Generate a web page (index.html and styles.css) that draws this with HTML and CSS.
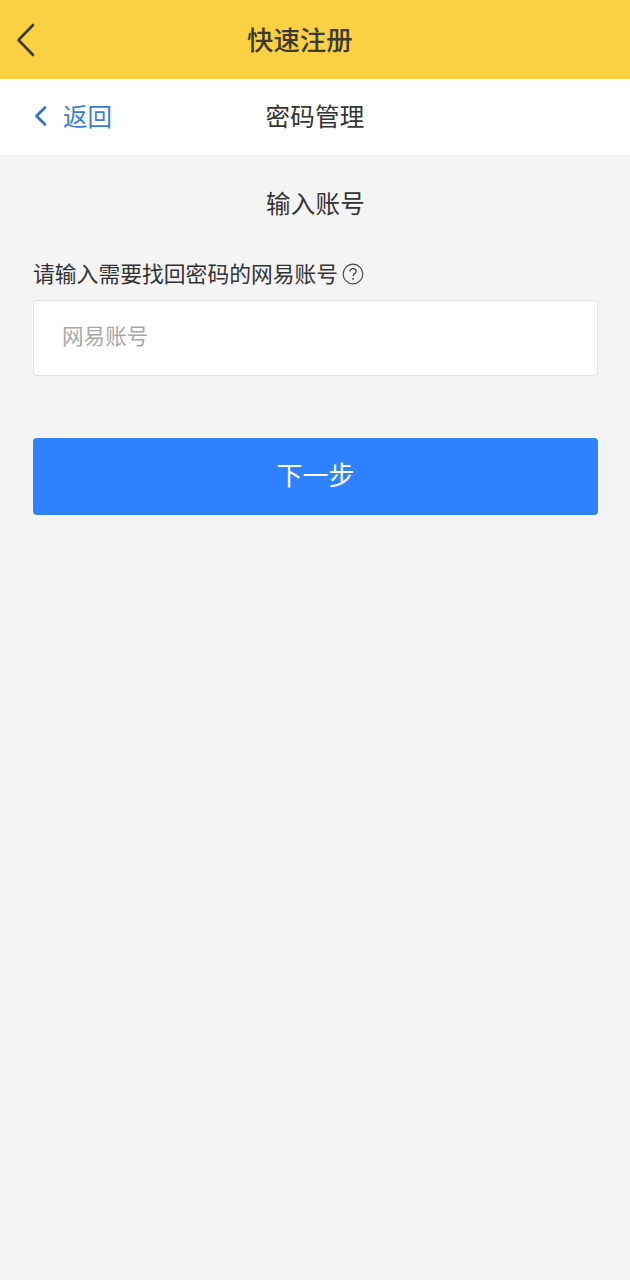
FILE: index.html
```html
<!DOCTYPE html>
<html lang="zh-CN">
<head>
    <meta charset="UTF-8">
    <meta name="viewport" content="width=device-width, initial-scale=1.0">
    <title>快速注册</title>
    <link rel="stylesheet" href="styles.css">
</head>
<body>

    <header class="app-bar">
        <svg class="app-back" width="20" height="34" viewBox="0 0 20 34">
            <path d="M17 2 L2.5 17 L17 32" fill="none" stroke="#3d3a30" stroke-width="2.6" stroke-linecap="round" stroke-linejoin="round"/>
        </svg>
        <h1>快速注册</h1>
    </header>

    <nav class="sub-bar">
        <a class="back-link">
            <svg class="back-arrow" width="14" height="22" viewBox="0 0 14 22">
                <path d="M11 2.5 L2.5 11 L11 19.5" fill="none" stroke="#2b74d8" stroke-width="2.8" stroke-linecap="round" stroke-linejoin="round"/>
            </svg>
            <span>返回</span>
        </a>
        <h2>密码管理</h2>
    </nav>

    <main class="content">
        <h3>输入账号</h3>
        <label class="field-label" for="account">
            请输入需要找回密码的网易账号
            <svg class="help-icon" width="22" height="22" viewBox="0 0 21 21">
                <circle cx="10.5" cy="10.5" r="9.4" fill="none" stroke="#444" stroke-width="1.1"/>
                <path d="M7.6 8.2 C7.6 6.4 9 5.4 10.6 5.4 C12.3 5.4 13.5 6.5 13.5 8 C13.5 9.9 10.6 10.2 10.6 12.6" fill="none" stroke="#444" stroke-width="1.2"/>
                <circle cx="10.6" cy="15.2" r="0.9" fill="#444"/>
            </svg>
        </label>
        <input class="field" id="account" type="text" placeholder="网易账号">
        <button class="next-btn">下一步</button>
    </main>

</body>
</html>
```

FILE: styles.css
```css
* {
    box-sizing: border-box;
}
body {
    margin: 0;
    min-height: 1280px;
    background: #f4f4f4;
    font-family: "Noto Sans CJK SC", "Noto Sans", sans-serif;
    color: #333;
}
h1, h2, h3 {
    margin: 0;
    font-weight: normal;
}
.app-bar {
    height: 79px;
    background: #fbd144;
    display: flex;
    align-items: center;
    padding-left: 16px;
}
.app-bar h1 {
    margin-left: 211px;
    padding-bottom: 2px;
    font-size: 26.4px;
    font-weight: 500;
    color: #3d3a30;
}
.app-back {
    display: block;
}
.sub-bar {
    height: 76px;
    background: #fff;
    display: flex;
    align-items: center;
    position: relative;
    justify-content: center;
}
.sub-bar h2 {
    padding-bottom: 4px;
    font-size: 24.5px;
    letter-spacing: 0.3px;
}
.back-link {
    position: absolute;
    left: 34px;
    top: 0;
    height: 100%;
    display: flex;
    align-items: center;
    gap: 15px;
    font-size: 24.5px;
    color: #3a80d8;
}
.back-arrow {
    margin-bottom: 3px;
}
.back-link span {
    padding-bottom: 4px;
}
.content {
    padding: 30px 32px 0 33px;
}
.content h3 {
    text-align: center;
    font-size: 24.5px;
    line-height: 36px;
    letter-spacing: 0.3px;
}
.field-label {
    margin-top: 35px;
    display: flex;
    align-items: center;
    gap: 4px;
    height: 36px;
    padding-bottom: 4px;
    font-size: 21.8px;
}
.help-icon {
    margin-top: 3px;
}
.field {
    display: block;
    width: 100%;
    height: 76px;
    margin-top: 8px;
    padding: 0 28px 8px;
    background: #fff;
    border: 1px solid #e2e2e2;
    border-radius: 4px;
    font-family: inherit;
    font-size: 21.6px;
    outline: none;
}
.field::placeholder {
    color: #a8a8a8;
}
.next-btn {
    display: block;
    width: 100%;
    height: 77px;
    margin-top: 62px;
    padding-bottom: 8px;
    background: #2e82ff;
    border: none;
    border-radius: 4px;
    color: #fff;
    font-family: inherit;
    font-size: 26px;
}
```
